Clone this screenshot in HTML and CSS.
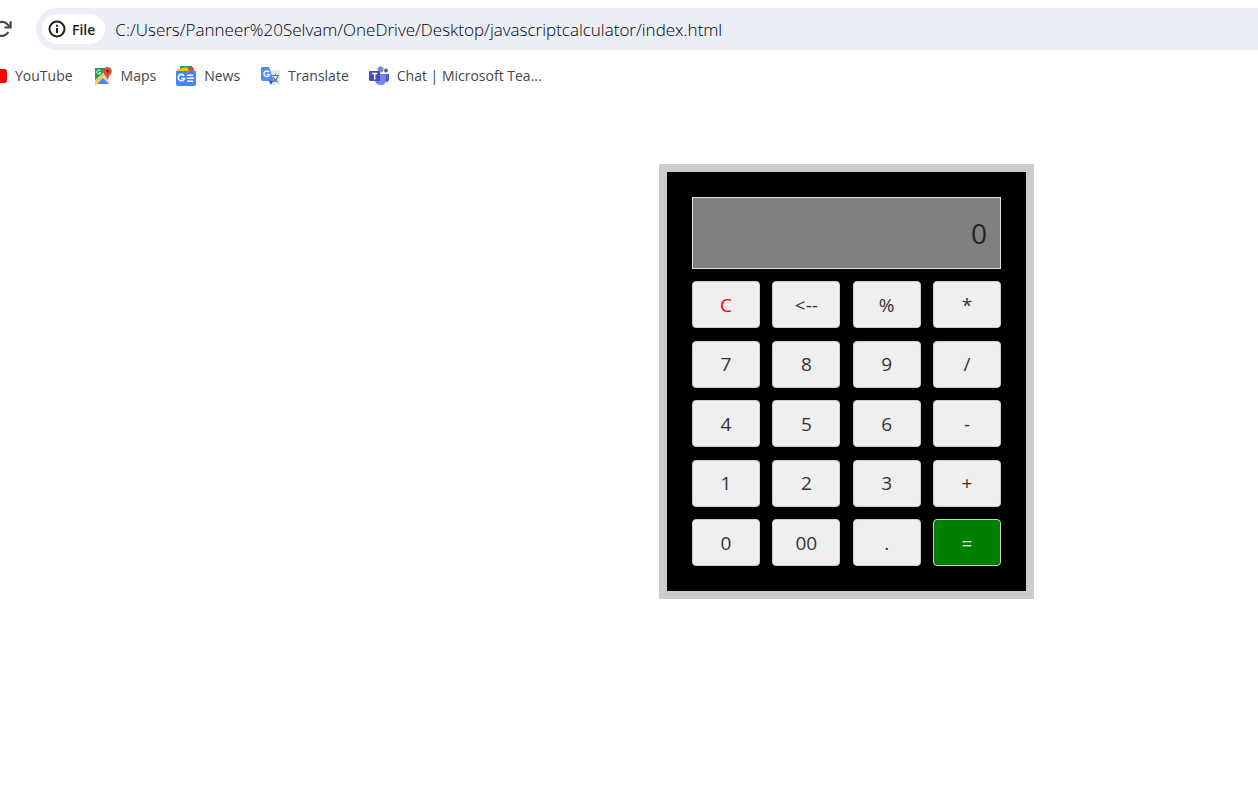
FILE: index.html
```html
<!DOCTYPE html>
<html lang="en">
<head>
<meta charset="utf-8">
<title>Calculator</title>
<link rel="stylesheet" href="styles.css">
</head>
<body>
<header class="browser">
  <div class="toolbar">
    <button class="reload" type="button" aria-label="Reload">
      <svg width="20" height="20" viewBox="0 0 20 20" fill="none" stroke="#45474a" stroke-width="2.2"><path d="M16.3 13.1A7 7 0 1 1 15.4 5.3L18 8"/><path d="M18.6 2.2v6.3h-6.2"/></svg>
    </button>
    <div class="omnibox">
      <button class="chip" type="button">
        <svg width="18" height="18" viewBox="0 0 18 18" fill="none" stroke="#1f1f1f" stroke-width="2"><circle cx="9" cy="9" r="7.5"/><path d="M9 8v5M9 4.7v2"/></svg>
        <span>File</span>
      </button>
      <input class="address" type="text" aria-label="Address" value="C:/Users/Panneer%20Selvam/OneDrive/Desktop/javascriptcalculator/index.html">
    </div>
  </div>
  <nav class="bookmarks" aria-label="Bookmarks">
    <a class="bookmark" href="#">
      <svg width="7" height="20" viewBox="0 0 7 20"><path fill="#f00" d="M0 3h4q3 0 3 3v8q0 3-3 3H0z"/></svg>
      <span>YouTube</span>
    </a>
    <a class="bookmark" href="#">
      <svg width="20" height="20" viewBox="0 0 20 20"><path fill="#e8e8e8" d="M2 2h14v16H2z"/><path fill="#1b9f5a" d="M2 2h11l2 5L2 18z"/><path fill="#f9cc46" d="m2 14 9-8 5 6-2 1-3-2-8 8H2z"/><path fill="#dadada" d="m3 18 8-8 6 6v2z"/><path fill="#4888f4" d="m4 18 6-6 6 6z"/><path fill="#dc4b3e" d="M14.500 1A4.300 4.300 0 0 1 18.800 5.300C18.800 9 15 9.500 14.600 14.500C14 9.500 10.200 9 10.200 5.300A4.300 4.300 0 0 1 14.500 1z"/><circle cx="14.500" cy="5" r="1.500" fill="#7b231e"/><path d="M7.500 4.800A2 2 0 1 0 7.800 6.500H6" fill="none" stroke="#fff"/></svg>
      <span>Maps</span>
    </a>
    <a class="bookmark" href="#">
      <svg width="20" height="20" viewBox="0 0 20 20"><path fill="#16a064" d="M4 0h12v5H4z"/><path fill="#ea4335" d="m9 3 8-2 2 6H9z"/><path fill="#fbbc04" d="m1 3 10-2 3 6H2z"/><path fill="#4285f4" d="M0 5h20v13q0 2-2 2H2q-2 0-2-2z"/><path d="M8 9.700A3.200 3.200 0 1 0 8.500 12.500H5.500M11 9.300h6M11 12.300h7M11 15.300h6" fill="none" stroke="#fff" stroke-width="1.600"/></svg>
      <span>News</span>
    </a>
    <a class="bookmark" href="#">
      <svg width="20" height="20" viewBox="0 0 20 20"><path fill="#e4e6e8" d="M8 4h10q2 0 2 2v11q0 2-2 2h-6z"/><path d="M12 9.500h7M15.500 8v2M18 10q-1 4-5 6M13 11q2 4 5 5" fill="none" stroke="#687378" stroke-width="1.100"/><path fill="#3548b8" d="M9 15h4l-2 4z"/><path fill="#4d8df5" d="M2 1h7l5 14H3q-2 0-2-2V2q0-1 1-1z"/><path d="M9 6A2.800 2.800 0 1 0 9.500 8.500H7" fill="none" stroke="#fff" stroke-width="1.400"/></svg>
      <span>Translate</span>
    </a>
    <a class="bookmark" href="#">
      <svg width="20" height="20" viewBox="0 0 20 20"><circle cx="17" cy="4.500" r="2" fill="#5059c9"/><circle cx="11.500" cy="3.500" r="3" fill="#7b83eb"/><path fill="#5059c9" d="M14 8h6v5q0 3-3 3h-3z"/><path fill="#7b83eb" d="M6 8h11v6q0 5-5 5-6 0-6-6z"/><path fill="#464eb8" d="M1 5h9q1 0 1 1v8q0 1-1 1H1q-1 0-1-1V6q0-1 1-1z"/><path d="M3 7.500h5.500M5.700 7.500v6" stroke="#fff" stroke-width="1.500"/></svg>
      <span>Chat | Microsoft Tea...</span>
    </a>
  </nav>
</header>
<main class="page">
  <form class="calculator">
    <input class="display" type="text" aria-label="Result" value="0" readonly>
    <div class="keys">
      <button class="key clear" type="button">C</button>
      <button class="key" type="button">&lt;--</button>
      <button class="key" type="button">%</button>
      <button class="key" type="button">*</button>
      <button class="key" type="button">7</button>
      <button class="key" type="button">8</button>
      <button class="key" type="button">9</button>
      <button class="key" type="button">/</button>
      <button class="key" type="button">4</button>
      <button class="key" type="button">5</button>
      <button class="key" type="button">6</button>
      <button class="key" type="button">-</button>
      <button class="key" type="button">1</button>
      <button class="key" type="button">2</button>
      <button class="key" type="button">3</button>
      <button class="key" type="button">+</button>
      <button class="key" type="button">0</button>
      <button class="key" type="button">00</button>
      <button class="key" type="button">.</button>
      <button class="key equals" type="button">=</button>
    </div>
  </form>
</main>
</body>
</html>
```
FILE: styles.css
```css
* { box-sizing: border-box; }
body {
  margin: 0;
  background: #fff;
  font-family: "Open Sans", "Noto Sans", sans-serif;
  color: #212529;
}
button, input { font: inherit; color: inherit; margin: 0; }
svg { flex: none; display: block; }

.browser { overflow: hidden; }
.toolbar {
  display: flex;
  align-items: center;
  padding-top: 8px;
}
.reload {
  flex: none;
  margin-left: -8px;
  padding: 0;
  border: 0;
  background: none;
}
.omnibox {
  flex: 1;
  display: flex;
  align-items: center;
  gap: 10px;
  height: 42px;
  margin-left: 24px;
  padding-left: 6px;
  border-radius: 21px 0 0 21px;
  background: #ebeef7;
}
.chip {
  flex: none;
  display: flex;
  align-items: center;
  gap: 6px;
  height: 30px;
  padding: 0 10px 0 6px;
  border: 0;
  border-radius: 15px;
  background: #fff;
  color: #1f1f1f;
  font-size: 14px;
  font-weight: 600;
}
.address {
  flex: 1;
  min-width: 0;
  padding: 0;
  border: 0;
  background: none;
  color: #000;
  font-size: 17px;
  font-weight: 300;
}
.bookmarks {
  display: flex;
  gap: 20px;
  padding: 14px 0;
}
.bookmark {
  display: flex;
  align-items: center;
  gap: 8px;
  color: #45474a;
  font-size: 14px;
  line-height: 24px;
  text-decoration: none;
  white-space: nowrap;
}

.page {
  display: flex;
  justify-content: center;
  padding: 62px 0 48px 435px;
}
.calculator {
  width: 375px;
  padding: 25px;
  border: 8px solid #ccc;
  background: #000;
}
.display {
  display: block;
  width: 100%;
  height: 72px;
  padding: 0 13px;
  border: 1px solid #dee2e6;
  background: #808080;
  font-size: 28px;
  text-align: right;
}
.keys {
  display: grid;
  grid-template-columns: repeat(4, 68px);
  grid-auto-rows: 47px;
  justify-content: space-between;
  align-content: space-between;
  height: 285px;
  margin-top: 12px;
}
.key {
  padding: 0;
  border: 1px solid #ccc;
  border-radius: 4px;
  background: #efefef;
  color: #333;
  font-size: 19px;
}
.clear { color: #f00; }
.equals { background: #008000; color: #fff; }
```
